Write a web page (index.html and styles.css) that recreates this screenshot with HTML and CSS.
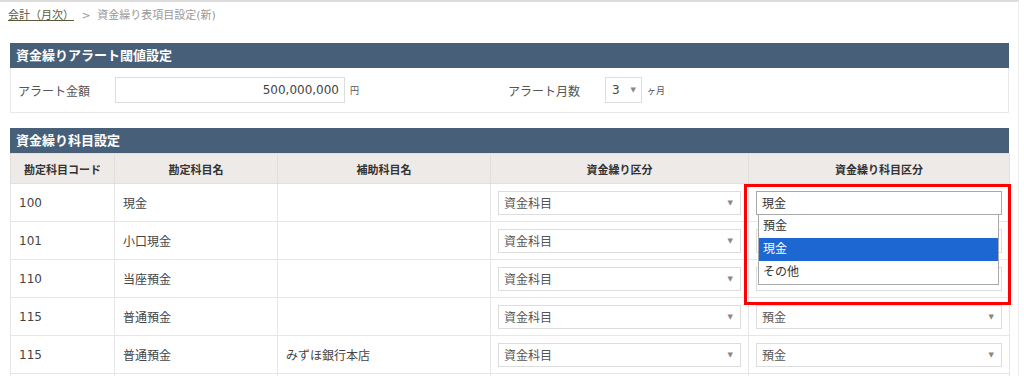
FILE: index.html
```html
<!DOCTYPE html>
<html lang="ja">

<head>
    <meta charset="UTF-8">
    <meta name="viewport" content="width=device-width, initial-scale=1.0">
    <title>資金繰り表項目設定(新)</title>
    <link rel="stylesheet" href="styles.css">
</head>

<body>
    <div class="page">
        <div class="breadcrumb">
            <a href="#">会計（月次）</a>
            <span class="sep">&gt;</span>
            <span>資金繰り表項目設定(新)</span>
        </div>

        <section class="panel">
            <h2 class="panel-title">資金繰りアラート閾値設定</h2>
            <div class="alert-form">
                <div class="field">
                    <label>アラート金額</label>
                    <div class="input amount">500,000,000</div>
                    <span class="unit">円</span>
                </div>
                <div class="field">
                    <label>アラート月数</label>
                    <div class="select month"><span>3</span><span class="arrow">▼</span></div>
                    <span class="unit">ヶ月</span>
                </div>
            </div>
        </section>

        <section class="panel">
            <h2 class="panel-title">資金繰り科目設定</h2>
            <table class="account-table">
                <colgroup>
                    <col style="width: 104px">
                    <col style="width: 163px">
                    <col style="width: 213px">
                    <col style="width: 258px">
                    <col style="width: 261px">
                </colgroup>
                <thead>
                    <tr>
                        <th>勘定科目コード</th>
                        <th>勘定科目名</th>
                        <th>補助科目名</th>
                        <th>資金繰り区分</th>
                        <th>資金繰り科目区分</th>
                    </tr>
                </thead>
                <tbody>
                    <tr>
                        <td>100</td>
                        <td>現金</td>
                        <td></td>
                        <td><div class="select"><span>資金科目</span><span class="arrow">▼</span></div></td>
                        <td class="focus-cell">
                            <div class="select open">
                                <span>現金</span>
                                <ul class="dropdown">
                                    <li>預金</li>
                                    <li class="selected">現金</li>
                                    <li>その他</li>
                                </ul>
                            </div>
                            <div class="highlight"></div>
                        </td>
                    </tr>
                    <tr>
                        <td>101</td>
                        <td>小口現金</td>
                        <td></td>
                        <td><div class="select"><span>資金科目</span><span class="arrow">▼</span></div></td>
                        <!-- covered by the open dropdown above -->
                        <td><div class="select"><span></span><span class="arrow">▼</span></div></td>
                    </tr>
                    <tr>
                        <td>110</td>
                        <td>当座預金</td>
                        <td></td>
                        <td><div class="select"><span>資金科目</span><span class="arrow">▼</span></div></td>
                        <td><div class="select"><span></span><span class="arrow">▼</span></div></td>
                    </tr>
                    <tr>
                        <td>115</td>
                        <td>普通預金</td>
                        <td></td>
                        <td><div class="select"><span>資金科目</span><span class="arrow">▼</span></div></td>
                        <td><div class="select"><span>預金</span><span class="arrow">▼</span></div></td>
                    </tr>
                    <tr>
                        <td>115</td>
                        <td>普通預金</td>
                        <td>みずほ銀行本店</td>
                        <td><div class="select"><span>資金科目</span><span class="arrow">▼</span></div></td>
                        <td><div class="select"><span>預金</span><span class="arrow">▼</span></div></td>
                    </tr>
                    <tr class="next-row">
                        <td></td>
                        <td></td>
                        <td></td>
                        <td></td>
                        <td></td>
                    </tr>
                </tbody>
            </table>
        </section>
    </div>
</body>

</html>
```

FILE: styles.css
```css
* {
    margin: 0;
    padding: 0;
    box-sizing: border-box;
}

body {
    font-family: "DejaVu Sans", "Noto Sans CJK JP", sans-serif;
    font-size: 12px;
    color: #444;
    background: #fff;
}

.page {
    width: 1019px;
    height: 376px;
    border-top: 2px solid #dcdcdc;
    border-right: 1px solid #eee;
    overflow: hidden;
}

.breadcrumb {
    height: 41px;
    padding: 4px 8px 0;
    font-size: 11px;
    color: #999;
}

.breadcrumb a {
    color: #5b5a3c;
    text-decoration: underline;
}

.breadcrumb .sep {
    margin: 0 3px 0 4px;
}

.panel {
    width: 999px;
    margin: 0 0 15px 10px;
}

.panel-title {
    height: 25px;
    line-height: 25px;
    padding-left: 6px;
    background: #475f79;
    color: #fff;
    font-size: 13px;
    font-weight: bold;
}

.alert-form {
    display: grid;
    grid-template-columns: 490px 1fr;
    align-items: center;
    height: 45px;
    border: 1px solid #e8e8e8;
    border-top: none;
}

.field {
    display: flex;
    align-items: center;
    padding-left: 7px;
}

.field label {
    width: 97px;
    color: #555;
}

.input {
    width: 230px;
    height: 26px;
    line-height: 24px;
    padding: 0 5px;
    border: 1px solid #ddd;
    color: #444;
}

.input.amount {
    text-align: right;
}

.unit {
    margin-left: 5px;
    font-size: 9px;
    color: #555;
}

.select {
    display: flex;
    justify-content: space-between;
    align-items: center;
    height: 24px;
    padding: 0 7px 0 5px;
    border: 1px solid #ddd;
    background: #fff;
    color: #555;
}

.select .arrow {
    font-size: 7px;
    color: #888;
}

.select.month {
    width: 37px;
    height: 26px;
    padding: 0 5px 0 6px;
    color: #444;
}

.account-table {
    width: 999px;
    border-collapse: collapse;
    table-layout: fixed;
}

.account-table th {
    height: 30px;
    background: #eeeae8;
    border: 1px solid #e2dfde;
    font-size: 11px;
    font-weight: bold;
    color: #333;
}

.account-table td {
    height: 38px;
    padding: 0 7px;
    border: 1px solid #e6e6e6;
    color: #444;
}

.account-table td:first-child,
.account-table td:nth-child(2),
.account-table td:nth-child(3) {
    padding-left: 8px;
}

.focus-cell {
    position: relative;
}

.select.open {
    position: relative;
    border-color: #a9a9a9;
    color: #333;
}

.dropdown {
    position: absolute;
    top: 22px;
    left: 1px;
    right: 2px;
    z-index: 2;
    list-style: none;
    background: #fff;
    border: 1px solid #a9a9a9;
}

.dropdown li {
    height: 23px;
    line-height: 23px;
    padding-left: 4px;
    color: #333;
}

.dropdown li.selected {
    background: #1c67d2;
    color: #fff;
}

.highlight {
    position: absolute;
    top: 0;
    left: -5px;
    width: 267px;
    height: 121px;
    border: 3px solid #f00;
    z-index: 3;
}
```
